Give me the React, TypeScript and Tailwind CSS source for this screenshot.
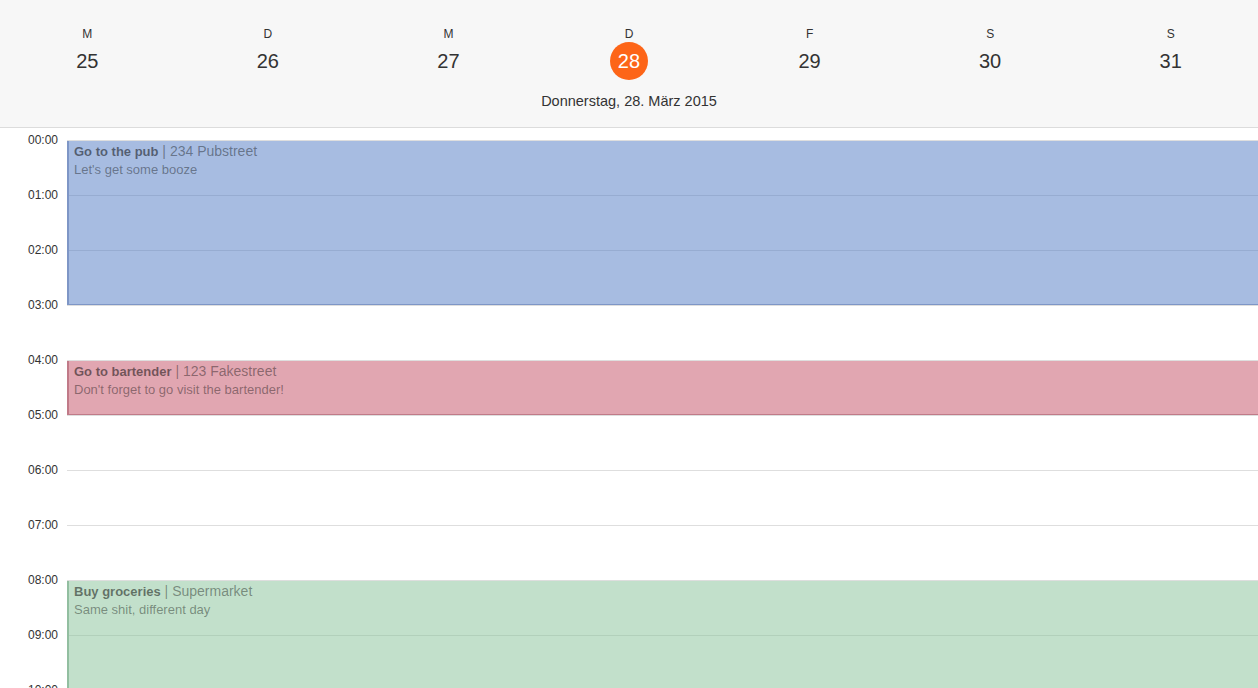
const days = [
  { letter: 'M', num: 25 },
  { letter: 'D', num: 26 },
  { letter: 'M', num: 27 },
  { letter: 'D', num: 28, active: true },
  { letter: 'F', num: 29 },
  { letter: 'S', num: 30 },
  { letter: 'S', num: 31 },
]

const hours = Array.from({ length: 24 }, (_, i) => `${String(i).padStart(2, '0')}:00`)

interface IEvent {
  title: string
  place: string
  note: string
  start: number
  end: number
  tone: string
}

const events: IEvent[] = [
  { title: 'Go to the pub', place: '234 Pubstreet', note: "Let's get some booze", start: 0, end: 3, tone: 'bg-[#5079c4]/50 border-[#7e96c6]' },
  { title: 'Go to bartender', place: '123 Fakestreet', note: "Don't forget to go visit the bartender!", start: 4, end: 5, tone: 'bg-[#c44d63]/50 border-[#c07a88]' },
  { title: 'Buy groceries', place: 'Supermarket', note: 'Same shit, different day', start: 8, end: 11, tone: 'bg-[#86c298]/50 border-[#92bea0]' },
]

function EventCard({ title, place, note, start, end, tone }: IEvent) {
  return (
    <div
      className={`absolute left-[67px] right-0 border-l-2 border-b ${tone} pl-[5px] pt-[1px] overflow-hidden`}
      style={{ top: start * 55 + 1, height: (end - start) * 55 - 1 }}
    >
      <div className="leading-[18px] whitespace-nowrap">
        <span className="text-[13px] font-bold text-black/50">{title}</span>
        <span className="text-[14px] text-black/40"> | {place}</span>
      </div>
      <div className="text-[13px] leading-[18px] text-black/40">{note}</div>
    </div>
  )
}

export default function App() {
  return (
    <div className="w-[1258px] h-[688px] overflow-hidden bg-white text-[#333] font-['Liberation_Sans',Arial,sans-serif]">
      <header className="h-[128px] bg-[#f7f7f7] border-b border-[#dcdcdc] overflow-hidden">
        <div className="grid grid-cols-7 w-[1264px] -ml-[3px] pt-[27px]">
          {days.map((d, i) => (
            <div key={i} className="flex flex-col items-center">
              <span className="text-[12px] leading-[14px]">{d.letter}</span>
              <span
                className={`mt-[1px] w-[38px] h-[38px] rounded-full flex items-center justify-center text-[20px] ${
                  d.active ? 'bg-[#fd6518] text-white' : 'text-[#333]'
                }`}
              >
                {d.num}
              </span>
            </div>
          ))}
        </div>
        <p className="mt-[12px] text-center text-[14.5px] leading-[18px] text-[#333]">Donnerstag, 28. März 2015</p>
      </header>

      <div className="pt-[12px]">
        <div className="relative">
          {hours.map((h) => (
            <div key={h} className="flex h-[55px]">
              <div className="w-[67px] shrink-0 pr-[9px] text-right text-[12px] leading-[14px] -mt-[7px]">{h}</div>
              <div className="flex-1 border-t border-[#dedede]" />
            </div>
          ))}
          {events.map((e) => (
            <EventCard key={e.title} {...e} />
          ))}
        </div>
      </div>
    </div>
  )
}
